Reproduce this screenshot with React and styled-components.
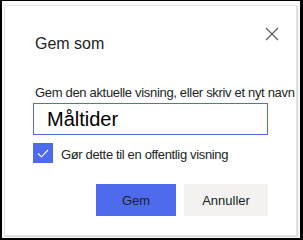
import styled, { createGlobalStyle } from "styled-components";

const Global = createGlobalStyle`
  html, body {
    margin: 0;
    padding: 0;
    background: #ffffff;
  }
  body {
    font-family: "Liberation Sans", Arial, sans-serif;
    color: #201f1e;
  }
`;

const Frame = styled.div`
  width: 303px;
  height: 240px;
  box-sizing: border-box;
  border-style: solid;
  border-color: #000;
  border-width: 1px 3px 2px 2px;
  background: #fafafa;
  overflow: hidden;
`;

const Dialog = styled.div`
  margin: 4px 0 0 2px;
  width: 293px;
  box-sizing: border-box;
  background: #fff;
  border: 1px solid #e4e4e4;
  box-shadow: 1px 1px 1px rgba(0, 0, 0, 0.12);
  padding: 16px 28px 19px 28px;
  display: flex;
  flex-direction: column;
`;

const Header = styled.div`
  display: flex;
  align-items: flex-start;
  justify-content: space-between;
  margin-right: -16px;
`;

const Title = styled.h2`
  margin: 11px 0 0 2px;
  font-size: 16px;
  line-height: 22px;
  font-weight: 400;
`;

const CloseButton = styled.button`
  width: 24px;
  height: 24px;
  padding: 0;
  border: none;
  background: transparent;
  display: flex;
  align-items: center;
  justify-content: center;
  svg {
    display: block;
  }
`;

const Label = styled.label`
  margin: 29px 0 0 2px;
  font-size: 13px;
  line-height: 18px;
  letter-spacing: -0.32px;
  white-space: nowrap;
`;

const NameInput = styled.input`
  margin-top: 1px;
  height: 32px;
  box-sizing: border-box;
  width: 100%;
  border: 1px solid #4f6bed;
  outline: none;
  padding: 0 0 0 13px;
  font-family: inherit;
  font-size: 20px;
  color: #000;
  background: #fff;
`;

const CheckRow = styled.div`
  margin-top: 8px;
  display: flex;
  align-items: flex-start;
  gap: 8px;
`;

const Box = styled.span`
  width: 20px;
  height: 20px;
  flex: none;
  background: ${(p) => (p.$checked ? "#4f6bed" : "#fff")};
  display: flex;
  align-items: center;
  justify-content: center;
`;

const CheckText = styled.span`
  padding-top: 3px;
  font-size: 13px;
  line-height: 18px;
  letter-spacing: -0.35px;
`;

const Actions = styled.div`
  margin-top: 20px;
  display: flex;
  justify-content: flex-end;
  gap: 8px;
`;

const Button = styled.button`
  height: 32px;
  width: ${(p) => p.$width}px;
  border: none;
  padding: 0;
  font-family: inherit;
  font-size: 13px;
  color: #201f1e;
  background: ${(p) => (p.$primary ? "#4f6bed" : "#f3f2f1")};
`;

export default function App() {
  return (
    <>
      <Global />
      <Frame>
        <Dialog>
          <Header>
            <Title>Gem som</Title>
            <CloseButton aria-label="Luk">
              <svg width="14" height="14" viewBox="0 0 14 14">
                <path
                  d="M1 1 L13 13 M13 1 L1 13"
                  stroke="#605e5c"
                  strokeWidth="1.2"
                  fill="none"
                />
              </svg>
            </CloseButton>
          </Header>
          <Label>Gem den aktuelle visning, eller skriv et nyt navn</Label>
          <NameInput defaultValue="Måltider" />
          <CheckRow>
            <Box $checked>
              <svg width="20" height="20" viewBox="0 0 20 20">
                <polyline
                  points="5,10.5 8.5,13.8 15,7"
                  stroke="#fff"
                  strokeWidth="1.1"
                  fill="none"
                />
              </svg>
            </Box>
            <CheckText>Gør dette til en offentlig visning</CheckText>
          </CheckRow>
          <Actions>
            <Button $primary $width={80}>Gem</Button>
            <Button $width={84}>Annuller</Button>
          </Actions>
        </Dialog>
      </Frame>
    </>
  );
}
